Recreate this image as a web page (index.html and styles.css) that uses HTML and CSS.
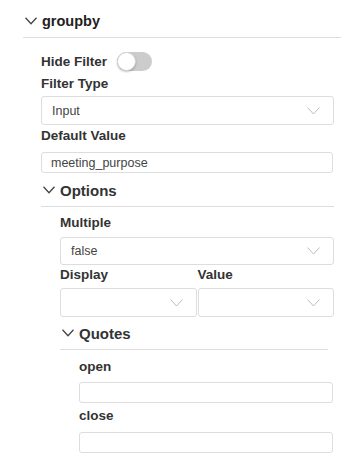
FILE: index.html
```html
<!DOCTYPE html>
<html>
<head>
<meta charset="utf-8">
<title>groupby filter</title>
<link rel="stylesheet" href="styles.css">
</head>
<body>
<div class="panel">
  <div class="sectionHead top">
    <svg class="chev" width="12" height="8" viewBox="0 0 12 8"><polyline points="0.5,0.8 6,6.8 11.5,0.8"/></svg>
    <span class="title arial">groupby</span>
  </div>

  <div class="sectionBody lvl0">
    <div class="toggleRow">
      <span class="label">Hide Filter</span>
      <span class="toggle"><span class="knob"></span></span>
    </div>

    <div class="label gapTop3">Filter Type</div>
    <div class="select selectFirst"><span>Input</span><svg class="selChev" width="13" height="8" viewBox="0 0 13 8"><polyline points="0.5,0.5 6.5,7 12.5,0.5"/></svg></div>

    <div class="label gapTop1">Default Value</div>
    <input class="field fieldDefault" type="text" value="meeting_purpose">

    <div class="sectionHead sub opts">
      <svg class="chev" width="12" height="8" viewBox="0 0 12 8"><polyline points="0.5,0.8 6,6.8 11.5,0.8"/></svg>
      <span class="title">Options</span>
    </div>

    <div class="sectionBody lvl1">
      <div class="label gapTop6">Multiple</div>
      <div class="select selectMulti"><span>false</span><svg class="selChev" width="13" height="8" viewBox="0 0 13 8"><polyline points="0.5,0.5 6.5,7 12.5,0.5"/></svg></div>

      <div class="pair">
        <div>
          <div class="label">Display</div>
          <div class="select selectPair"><span></span><svg class="selChev" width="13" height="8" viewBox="0 0 13 8"><polyline points="0.5,0.5 6.5,7 12.5,0.5"/></svg></div>
        </div>
        <div>
          <div class="label">Value</div>
          <div class="select selectPair"><span></span><svg class="selChev" width="13" height="8" viewBox="0 0 13 8"><polyline points="0.5,0.5 6.5,7 12.5,0.5"/></svg></div>
        </div>
      </div>

      <div class="sectionHead sub quotes">
        <svg class="chev" width="12" height="8" viewBox="0 0 12 8"><polyline points="0.5,0.8 6,6.8 11.5,0.8"/></svg>
        <span class="title">Quotes</span>
      </div>

      <div class="sectionBody lvl2">
        <div class="label arial gapTop7">open</div>
        <input class="field gapTop5" type="text" value="">
        <div class="label arial gapTop3">close</div>
        <input class="field gapTop6" type="text" value="">
      </div>
    </div>
  </div>
</div>
</body>
</html>
```

FILE: styles.css
```css
body {margin:0; background:#fff; font-family:"Liberation Sans", Arial, sans-serif; color:#333;}

.panel {width:318px; padding-left:23px;}

.sectionHead {display:flex; align-items:center; height:20px; border-bottom:1px solid #ddd;}
.sectionHead .chev {flex:none; margin-right:5px; fill:none; stroke:#444; stroke-width:1.3;}
.sectionHead .title {font-weight:bold; font-size:15px; color:#333;}
.sectionHead.top {padding:11px 0 6px 2px;}
.sectionHead.top .title {font-size:14.5px; color:#222;}
.sectionHead.sub {padding:0 0 6px 2px;}
.sectionHead.opts {margin-top:7px;}
.sectionHead.quotes {margin-top:6px; margin-right:6px;}

.sectionBody.lvl0 {padding:0 7px 0 18px;}
.sectionBody.lvl1 {padding-left:19px;}
.sectionBody.lvl2 {padding-left:19px; padding-right:1px;}

.label {font-weight:bold; font-size:13.5px; line-height:20px; color:#333;}
.arial {font-family:"Liberation Sans", Arial, sans-serif;}

.toggleRow {display:flex; align-items:center; margin-top:14px; height:19px;}
.toggle {position:relative; display:inline-block; width:35px; height:19px; margin-left:10px; background:#ccc; border-radius:10px;}
.toggle .knob {position:absolute; left:0; top:0; width:19px; height:19px; box-sizing:border-box; border-radius:50%; background:#fff; border:1px solid #d6d6d6; box-shadow:0 1px 2px rgba(0,0,0,0.25);}

.select {display:flex; align-items:center; justify-content:space-between; box-sizing:border-box; height:29px; padding:0 13px 0 10px; border:1px solid #ddd; border-radius:3px; font-size:12.5px; color:#444;}
.select .selChev {flex:none; fill:none; stroke:#bbb; stroke-width:1;}
.selectFirst {margin-top:2px;}
.selectMulti {margin-top:4px; height:28px;}
.selectPair {margin-top:3px;}

.pair {display:grid; grid-template-columns:1fr 1fr; column-gap:1px;}

.field {display:block; box-sizing:border-box; width:100%; height:21px; padding:0 9px; border:1px solid #ddd; border-radius:3px; font-family:"Liberation Sans", Arial, sans-serif; font-size:12.5px; color:#444; outline:none;}
.fieldDefault {margin-top:6px; width:292px;}

.gapTop1 {margin-top:1px;}
.gapTop3 {margin-top:3px;}
.gapTop5 {margin-top:5px;}
.gapTop6 {margin-top:6px;}
.gapTop7 {margin-top:7px;}
```
